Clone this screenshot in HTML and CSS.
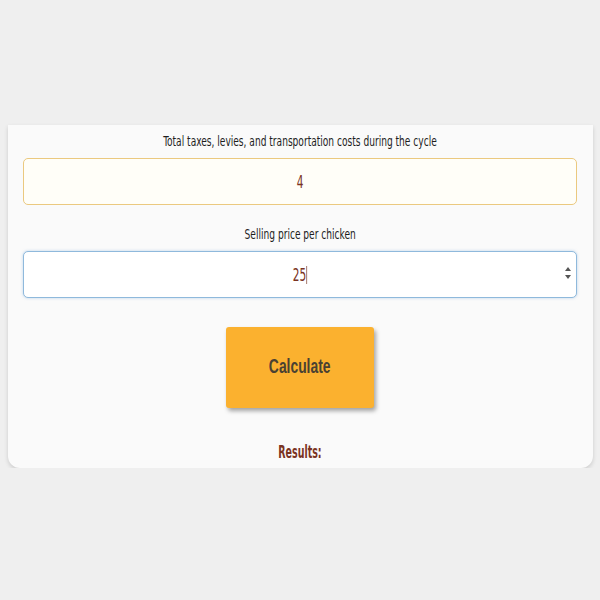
FILE: index.html
```html
<!DOCTYPE html>
<html lang="en">
  <head>
    <meta charset="UTF-8" />
    <meta name="viewport" content="width=device-width, initial-scale=1.0" />
    <title>Chicken Profit Calculator</title>
    <link rel="stylesheet" href="styles.css">
  </head>
  <body>
    <div class="calculadora">
      <label class="etiqueta"><span class="estrecho">Total taxes, levies, and transportation costs during the cycle</span></label>
      <div class="campo campo-lleno">
        <span class="valor estrecho">4</span>
      </div>

      <label class="etiqueta"><span class="estrecho">Selling price per chicken</span></label>
      <div class="campo campo-activo">
        <span class="valor estrecho">25<span class="cursor"></span></span>
        <span class="flechas">
          <span class="flecha-arriba"></span>
          <span class="flecha-abajo"></span>
        </span>
      </div>

      <button class="calcular"><span class="estrecho">Calculate</span></button>

      <h3 class="resultados"><span class="estrecho">Results:</span></h3>
    </div>
  </body>
</html>
```

FILE: styles.css
```css
* {
  box-sizing: border-box;
  margin: 0;
  padding: 0;
}
body {
  background: #efefef;
  padding: 125px 7px 0 8px;
  font-family: 'DejaVu Sans Condensed', 'DejaVu Sans', sans-serif;
}

/* the text in the original is a narrow comic face */
.estrecho {
  display: inline-block;
  transform: scaleX(0.72);
  white-space: nowrap;
}

.calculadora {
  background: #fafafa;
  border-radius: 0 0 12px 12px;
  box-shadow: 0 2px 4px rgba(0, 0, 0, 0.15);
  padding: 7px 16px 6px 15px;
  display: flex;
  flex-direction: column;
  align-items: stretch;
}

.etiqueta {
  text-align: center;
  font-size: 14px;
  line-height: 19px;
  color: #1e1e1e;
  margin-bottom: 7px;
}

.campo {
  width: 100%;
  height: 47px;
  border-radius: 5px;
  font-size: 18px;
  color: #7a3322;
  display: flex;
  align-items: center;
  justify-content: center;
  position: relative;
}

.valor {
  transform: scaleX(0.65);
}

.campo-lleno {
  background: #fffef8;
  border: 1px solid #ebc97f;
  margin-bottom: 20px;
}

.campo-activo {
  background: #fff;
  border: 1px solid #8fb9dc;
  box-shadow: 0 0 3px rgba(120, 170, 215, 0.5);
}

.cursor {
  display: inline-block;
  width: 1px;
  height: 18px;
  background: #7a3322;
  vertical-align: -3px;
}

.flechas {
  position: absolute;
  right: 5px;
  top: 15px;
  display: flex;
  flex-direction: column;
  gap: 4px;
}
.flecha-arriba,
.flecha-abajo {
  width: 0;
  height: 0;
  border-left: 3px solid transparent;
  border-right: 3px solid transparent;
}
.flecha-arriba {
  border-bottom: 4px solid #555;
}
.flecha-abajo {
  border-top: 4px solid #555;
}

.calcular {
  align-self: center;
  width: 148px;
  height: 81px;
  margin-top: 29px;
  padding-bottom: 4px;
  background: #fbb12f;
  border: none;
  border-radius: 3px;
  box-shadow: 2px 3px 4px rgba(0, 0, 0, 0.35);
  color: #4a4132;
  font-family: 'Liberation Sans', Arial, sans-serif;
  font-weight: bold;
  font-size: 21px;
  cursor: pointer;
}
.calcular .estrecho {
  transform: scaleX(0.66);
}

.resultados {
  text-align: center;
  margin-top: 34px;
  font-size: 17px;
  line-height: 20px;
  color: #7a3322;
}
.resultados .estrecho {
  transform: scaleX(0.62);
}
```
